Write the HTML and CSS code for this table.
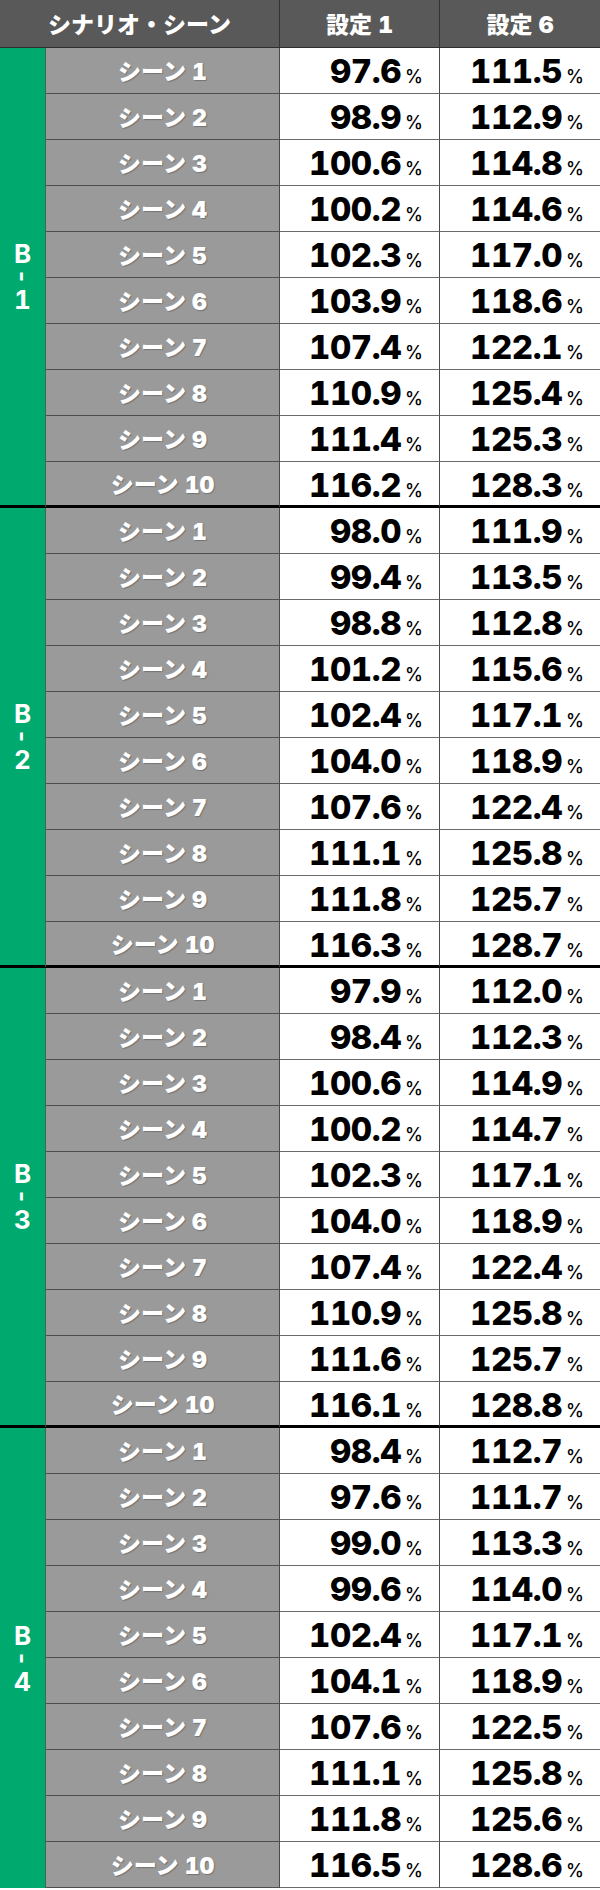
FILE: index.html
```html
<!DOCTYPE html>
<html lang="ja">
<head>
<meta charset="utf-8">
<title>シナリオ・シーン</title>
<link rel="stylesheet" href="styles.css">
</head>
<body>
<div class="table">
  <div class="head">
    <div class="hc">シナリオ・シーン</div>
    <div class="hc">設定 1</div>
    <div class="hc">設定 6</div>
  </div>

  <div class="group">
    <div class="label"><span>B</span><span class="dash">-</span><span>1</span></div>
    <div class="scene">シーン 1</div><div class="num"><span class="v">97.6</span><span class="p">%</span></div><div class="num"><span class="v">111.5</span><span class="p">%</span></div>
    <div class="scene">シーン 2</div><div class="num"><span class="v">98.9</span><span class="p">%</span></div><div class="num"><span class="v">112.9</span><span class="p">%</span></div>
    <div class="scene">シーン 3</div><div class="num"><span class="v">100.6</span><span class="p">%</span></div><div class="num"><span class="v">114.8</span><span class="p">%</span></div>
    <div class="scene">シーン 4</div><div class="num"><span class="v">100.2</span><span class="p">%</span></div><div class="num"><span class="v">114.6</span><span class="p">%</span></div>
    <div class="scene">シーン 5</div><div class="num"><span class="v">102.3</span><span class="p">%</span></div><div class="num"><span class="v">117.0</span><span class="p">%</span></div>
    <div class="scene">シーン 6</div><div class="num"><span class="v">103.9</span><span class="p">%</span></div><div class="num"><span class="v">118.6</span><span class="p">%</span></div>
    <div class="scene">シーン 7</div><div class="num"><span class="v">107.4</span><span class="p">%</span></div><div class="num"><span class="v">122.1</span><span class="p">%</span></div>
    <div class="scene">シーン 8</div><div class="num"><span class="v">110.9</span><span class="p">%</span></div><div class="num"><span class="v">125.4</span><span class="p">%</span></div>
    <div class="scene">シーン 9</div><div class="num"><span class="v">111.4</span><span class="p">%</span></div><div class="num"><span class="v">125.3</span><span class="p">%</span></div>
    <div class="scene">シーン 10</div><div class="num"><span class="v">116.2</span><span class="p">%</span></div><div class="num"><span class="v">128.3</span><span class="p">%</span></div>
  </div>

  <div class="group">
    <div class="label"><span>B</span><span class="dash">-</span><span>2</span></div>
    <div class="scene">シーン 1</div><div class="num"><span class="v">98.0</span><span class="p">%</span></div><div class="num"><span class="v">111.9</span><span class="p">%</span></div>
    <div class="scene">シーン 2</div><div class="num"><span class="v">99.4</span><span class="p">%</span></div><div class="num"><span class="v">113.5</span><span class="p">%</span></div>
    <div class="scene">シーン 3</div><div class="num"><span class="v">98.8</span><span class="p">%</span></div><div class="num"><span class="v">112.8</span><span class="p">%</span></div>
    <div class="scene">シーン 4</div><div class="num"><span class="v">101.2</span><span class="p">%</span></div><div class="num"><span class="v">115.6</span><span class="p">%</span></div>
    <div class="scene">シーン 5</div><div class="num"><span class="v">102.4</span><span class="p">%</span></div><div class="num"><span class="v">117.1</span><span class="p">%</span></div>
    <div class="scene">シーン 6</div><div class="num"><span class="v">104.0</span><span class="p">%</span></div><div class="num"><span class="v">118.9</span><span class="p">%</span></div>
    <div class="scene">シーン 7</div><div class="num"><span class="v">107.6</span><span class="p">%</span></div><div class="num"><span class="v">122.4</span><span class="p">%</span></div>
    <div class="scene">シーン 8</div><div class="num"><span class="v">111.1</span><span class="p">%</span></div><div class="num"><span class="v">125.8</span><span class="p">%</span></div>
    <div class="scene">シーン 9</div><div class="num"><span class="v">111.8</span><span class="p">%</span></div><div class="num"><span class="v">125.7</span><span class="p">%</span></div>
    <div class="scene">シーン 10</div><div class="num"><span class="v">116.3</span><span class="p">%</span></div><div class="num"><span class="v">128.7</span><span class="p">%</span></div>
  </div>

  <div class="group">
    <div class="label"><span>B</span><span class="dash">-</span><span>3</span></div>
    <div class="scene">シーン 1</div><div class="num"><span class="v">97.9</span><span class="p">%</span></div><div class="num"><span class="v">112.0</span><span class="p">%</span></div>
    <div class="scene">シーン 2</div><div class="num"><span class="v">98.4</span><span class="p">%</span></div><div class="num"><span class="v">112.3</span><span class="p">%</span></div>
    <div class="scene">シーン 3</div><div class="num"><span class="v">100.6</span><span class="p">%</span></div><div class="num"><span class="v">114.9</span><span class="p">%</span></div>
    <div class="scene">シーン 4</div><div class="num"><span class="v">100.2</span><span class="p">%</span></div><div class="num"><span class="v">114.7</span><span class="p">%</span></div>
    <div class="scene">シーン 5</div><div class="num"><span class="v">102.3</span><span class="p">%</span></div><div class="num"><span class="v">117.1</span><span class="p">%</span></div>
    <div class="scene">シーン 6</div><div class="num"><span class="v">104.0</span><span class="p">%</span></div><div class="num"><span class="v">118.9</span><span class="p">%</span></div>
    <div class="scene">シーン 7</div><div class="num"><span class="v">107.4</span><span class="p">%</span></div><div class="num"><span class="v">122.4</span><span class="p">%</span></div>
    <div class="scene">シーン 8</div><div class="num"><span class="v">110.9</span><span class="p">%</span></div><div class="num"><span class="v">125.8</span><span class="p">%</span></div>
    <div class="scene">シーン 9</div><div class="num"><span class="v">111.6</span><span class="p">%</span></div><div class="num"><span class="v">125.7</span><span class="p">%</span></div>
    <div class="scene">シーン 10</div><div class="num"><span class="v">116.1</span><span class="p">%</span></div><div class="num"><span class="v">128.8</span><span class="p">%</span></div>
  </div>

  <div class="group">
    <div class="label"><span>B</span><span class="dash">-</span><span>4</span></div>
    <div class="scene">シーン 1</div><div class="num"><span class="v">98.4</span><span class="p">%</span></div><div class="num"><span class="v">112.7</span><span class="p">%</span></div>
    <div class="scene">シーン 2</div><div class="num"><span class="v">97.6</span><span class="p">%</span></div><div class="num"><span class="v">111.7</span><span class="p">%</span></div>
    <div class="scene">シーン 3</div><div class="num"><span class="v">99.0</span><span class="p">%</span></div><div class="num"><span class="v">113.3</span><span class="p">%</span></div>
    <div class="scene">シーン 4</div><div class="num"><span class="v">99.6</span><span class="p">%</span></div><div class="num"><span class="v">114.0</span><span class="p">%</span></div>
    <div class="scene">シーン 5</div><div class="num"><span class="v">102.4</span><span class="p">%</span></div><div class="num"><span class="v">117.1</span><span class="p">%</span></div>
    <div class="scene">シーン 6</div><div class="num"><span class="v">104.1</span><span class="p">%</span></div><div class="num"><span class="v">118.9</span><span class="p">%</span></div>
    <div class="scene">シーン 7</div><div class="num"><span class="v">107.6</span><span class="p">%</span></div><div class="num"><span class="v">122.5</span><span class="p">%</span></div>
    <div class="scene">シーン 8</div><div class="num"><span class="v">111.1</span><span class="p">%</span></div><div class="num"><span class="v">125.8</span><span class="p">%</span></div>
    <div class="scene">シーン 9</div><div class="num"><span class="v">111.8</span><span class="p">%</span></div><div class="num"><span class="v">125.6</span><span class="p">%</span></div>
    <div class="scene">シーン 10</div><div class="num"><span class="v">116.5</span><span class="p">%</span></div><div class="num"><span class="v">128.6</span><span class="p">%</span></div>
  </div>
</div>
</body>
</html>
```

FILE: styles.css
```css
* { box-sizing: border-box; }
html, body { margin: 0; padding: 0; background: #fff; }
body {
  font-family: Inter, "Noto Sans CJK JP", sans-serif;
  font-variant-numeric: tabular-nums;
  width: 600px;
}
.table { width: 600px; }

.head {
  display: grid;
  grid-template-columns: 280px 160px 160px;
  height: 48px;
  background: #595959;
  border-bottom: 1px solid #2e2e2e;
}
.hc {
  display: flex;
  align-items: center;
  justify-content: center;
  color: #fff;
  font-weight: 900;
  font-size: 23px;
  word-spacing: 0;
  border-right: 1px solid #333;
  padding-bottom: 1px;
}
.hc:last-child { border-right: none; }

.group {
  display: grid;
  grid-template-columns: 46px 234px 160px 160px;
  grid-auto-rows: 46px;
}
.label {
  grid-column: 1;
  grid-row: 1 / span 10;
  background: #00aa6e;
  color: #fff;
  font-weight: 700;
  font-size: 26px;
  display: flex;
  flex-direction: column;
  align-items: center;
  justify-content: center;
  line-height: 23px;
  border-right: 1px solid #2f6e55;
}
.label span { display: block; }
.dash { transform: rotate(90deg); font-size: 24px; }

.scene {
  background: #9a9a9a;
  color: #fff;
  font-weight: 900;
  font-size: 23px;
  word-spacing: 0;
  display: flex;
  align-items: center;
  justify-content: center;
  border-bottom: 1px solid #4e4e4e;
  border-right: 1px solid #4a4a4a;
  text-shadow: 1px 1px 1px rgba(0,0,0,0.25);
  padding-bottom: 1px;
}
.num {
  text-align: right;
  padding-right: 16px;
  padding-top: 2px;
  line-height: 43px;
  color: #000;
  font-weight: 800;
  border-bottom: 1px solid #6a6a6a;
  border-right: 1px solid #4a4a4a;
  white-space: nowrap;
}
.num:last-child, .group > .num:nth-child(3n+1) { border-right: none; }
.v { font-size: 33px; letter-spacing: -0.4px; }
.p { font-size: 18px; margin-left: 4px; font-weight: 500; }

.group:not(:last-child) > .label,
.group:not(:last-child) > :nth-last-child(-n+3) {
  border-bottom: 3px solid #000;
}
```
